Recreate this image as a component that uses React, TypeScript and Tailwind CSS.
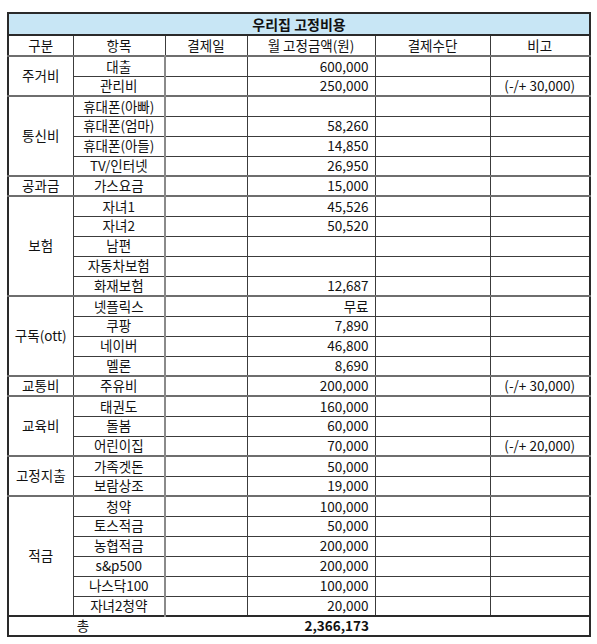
type Item = { name: string; amount?: string; note?: string };
type Group = { label: string; items: Item[] };

const groups: Group[] = [
  {
    label: "주거비",
    items: [
      { name: "대출", amount: "600,000" },
      { name: "관리비", amount: "250,000", note: "(-/+ 30,000)" },
    ],
  },
  {
    label: "통신비",
    items: [
      { name: "휴대폰(아빠)" },
      { name: "휴대폰(엄마)", amount: "58,260" },
      { name: "휴대폰(아들)", amount: "14,850" },
      { name: "TV/인터넷", amount: "26,950" },
    ],
  },
  { label: "공과금", items: [{ name: "가스요금", amount: "15,000" }] },
  {
    label: "보험",
    items: [
      { name: "자녀1", amount: "45,526" },
      { name: "자녀2", amount: "50,520" },
      { name: "남편" },
      { name: "자동차보험" },
      { name: "화재보험", amount: "12,687" },
    ],
  },
  {
    label: "구독(ott)",
    items: [
      { name: "넷플릭스", amount: "무료" },
      { name: "쿠팡", amount: "7,890" },
      { name: "네이버", amount: "46,800" },
      { name: "멜론", amount: "8,690" },
    ],
  },
  {
    label: "교통비",
    items: [{ name: "주유비", amount: "200,000", note: "(-/+ 30,000)" }],
  },
  {
    label: "교육비",
    items: [
      { name: "태권도", amount: "160,000" },
      { name: "돌봄", amount: "60,000" },
      { name: "어린이집", amount: "70,000", note: "(-/+ 20,000)" },
    ],
  },
  {
    label: "고정지출",
    items: [
      { name: "가족겟돈", amount: "50,000" },
      { name: "보람상조", amount: "19,000" },
    ],
  },
  {
    label: "적금",
    items: [
      { name: "청약", amount: "100,000" },
      { name: "토스적금", amount: "50,000" },
      { name: "농협적금", amount: "200,000" },
      { name: "s&p500", amount: "200,000" },
      { name: "나스닥100", amount: "100,000" },
      { name: "자녀2청약", amount: "20,000" },
    ],
  },
];

const cell = "border border-[#3c3c3c] p-0";

export default function App() {
  return (
    <div className="min-h-screen bg-white pt-[12px] pl-[7px] font-['Noto_Sans_CJK_KR','Noto_Sans',sans-serif] text-[13.5px] text-[#111]">
      <table className="w-[582px] table-fixed border-collapse border-2 border-[#2a2a2a] leading-none">
        <colgroup>
          <col className="w-[65px]" />
          <col className="w-[92px]" />
          <col className="w-[82px]" />
          <col className="w-[128px]" />
          <col className="w-[115px]" />
          <col className="w-[100px]" />
        </colgroup>
        <tbody>
          <tr className="h-[22px]">
            <td
              colSpan={6}
              className="border-2 border-[#2a2a2a] bg-[#c8e6f5] p-0 text-center text-[14px] font-bold"
            >
              우리집 고정비용
            </td>
          </tr>
          <tr className="h-[21px]">
            <td className={`${cell} text-center`}>구분</td>
            <td className={`${cell} text-center`}>항목</td>
            <td className={`${cell} text-center`}>결제일</td>
            <td className={`${cell} text-center`}>월 고정금액(원)</td>
            <td className={`${cell} text-center`}>결제수단</td>
            <td className={`${cell} text-center`}>비고</td>
          </tr>
          {groups.map((g) =>
            g.items.map((it, i) => {
              const top = i === 0 ? "border-t-2 border-t-[#6e6e6e]" : "";
              return (
                <tr key={g.label + it.name} className="h-[20px]">
                  {i === 0 && (
                    <td
                      rowSpan={g.items.length}
                      className={`${cell} border-t-2 border-t-[#6e6e6e] text-center`}
                    >
                      {g.label}
                    </td>
                  )}
                  <td
                    className={`${cell} ${top} border-r-2 border-r-[#8a8a8a] text-center`}
                  >
                    {it.name}
                  </td>
                  <td className={`${cell} ${top}`}></td>
                  <td className={`${cell} ${top} pr-[6px] text-right`}>
                    {it.amount}
                  </td>
                  <td className={`${cell} ${top}`}></td>
                  <td className={`${cell} ${top} text-center`}>{it.note}</td>
                </tr>
              );
            })
          )}
          <tr className="h-[20px]">
            <td
              colSpan={2}
              className="border-t-2 border-t-[#2a2a2a] p-0 pr-[8px] text-center"
            >
              총
            </td>
            <td
              colSpan={2}
              className="border-t-2 border-t-[#2a2a2a] p-0 pr-[6px] text-right font-bold"
            >
              2,366,173
            </td>
            <td colSpan={2} className="border-t-2 border-t-[#2a2a2a] p-0"></td>
          </tr>
        </tbody>
      </table>
    </div>
  );
}
